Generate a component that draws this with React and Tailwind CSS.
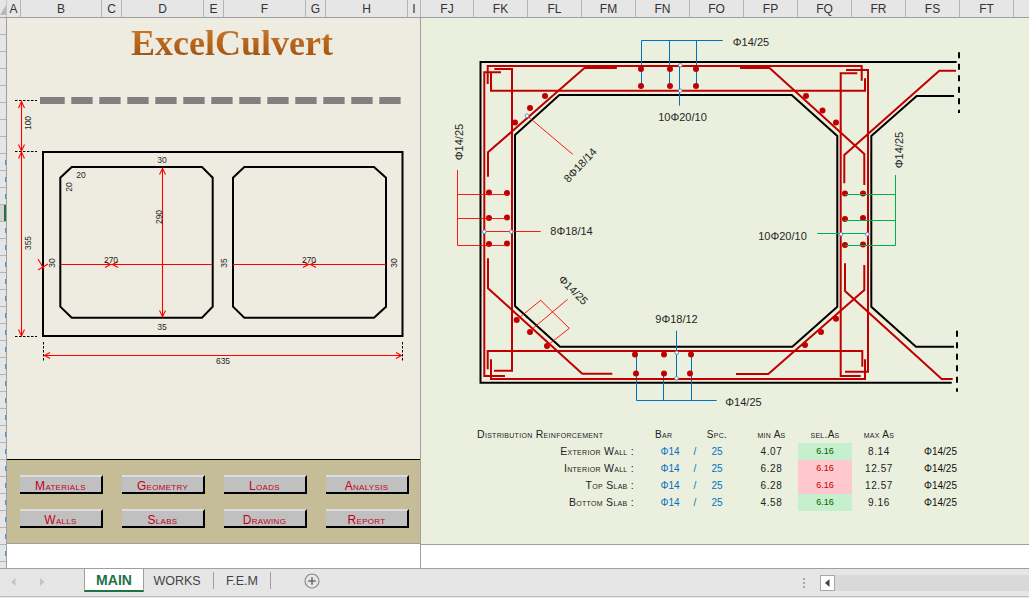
import React from "react";

const COLS_L = [
  ["A", "w-[14px]"], ["B", "w-[81px]"], ["C", "w-[20px]"], ["D", "w-[82px]"], ["E", "w-[20px]"],
  ["F", "w-[82px]"], ["G", "w-[20px]"], ["H", "w-[82px]"], ["I", "w-[13px]"],
  ["FJ", "w-[53px]"], ["FK", "w-[54px]"], ["FL", "w-[54px]"], ["FM", "w-[54px]"], ["FN", "w-[54px]"],
  ["FO", "w-[54px]"], ["FP", "w-[54px]"], ["FQ", "w-[54px]"], ["FR", "w-[54px]"], ["FS", "w-[54px]"], ["FT", "w-[54px]"],
];

const BUTTONS = ["Materials", "Geometry", "Loads", "Analysis", "Walls", "Slabs", "Drawing", "Report"];

const ROWS = [
  { label: "Exterior Wall :", min: "4.07", ok: true, max: "8.14" },
  { label: "Interior Wall :", min: "6.28", ok: false, max: "12.57" },
  { label: "Top Slab :", min: "6.28", ok: false, max: "12.57" },
  { label: "Bottom Slab :", min: "4.58", ok: true, max: "9.16" },
];

const RED = "#c00000";
const BARS = [
  "M487.7 84V66H861.7V80.7",
  "M491 71.7V90.7H865V78.3",
  "M501 72.3H484.3V376H505",
  "M494.3 69H512V370.7H494",
  "M488 176.7V152.3L584.7 67.7H616.7",
  "M488 258.3V288.3L582.3 373.7H612.3",
  "M487.7 369.3V351H862.3V366.7",
  "M491 359.3V379H865V359.3",
  "M857.3 73.3H840.7V376H860.7",
  "M846 70H868V371.7H845",
  "M740 67.7H769.3L864.3 154V185",
  "M956 70.7H939.3L844.3 155V183.3",
  "M736 374H768.3L864.3 290V265",
  "M952.7 379H941.7L845 291V263.3",
];
const DOTS = [
  [641, 69], [670, 69], [696, 69], [641, 86], [670, 86], [696, 86],
  [545, 96], [530, 108], [515, 122.5],
  [489, 192.5], [507, 193], [489, 218], [507, 217.5], [489, 244], [507, 243.5],
  [516.7, 320], [530, 332], [547, 346],
  [635, 354.5], [664, 354.5], [691, 354.5], [636, 373.5], [664, 373.5], [690, 373.5],
  [806, 96], [822.5, 110.5], [836, 122.5],
  [845, 193.5], [863, 193.5], [845, 219], [863, 218], [845, 245], [863, 244.5],
  [836, 318.7], [821, 332], [805, 345],
];
const NODES = [
  [680.3, 65.3], [680.3, 90.7], [676.7, 352.7], [676.5, 378.3],
  [484.3, 231.7], [511.3, 231.7], [527, 115.7], [841, 234.3], [867.3, 234.3],
];
const LEFT_LABELS = [
  [28, 123, "100", -90], [28, 243, "355", -90], [162, 160, "30", 0], [81, 175, "20", 0], [69, 187, "20", -90],
  [159, 217, "290", -90], [52, 263, "30", -90], [111, 260, "270", 0], [224, 263, "35", -90], [309, 260, "270", 0],
  [394, 263, "30", -90], [162, 327, "35", 0], [223, 361, "635", 0],
];
const RIGHT_LABELS = [
  [751, 42, "Φ14/25", 0], [682.5, 117, "10Φ20/10", 0], [580, 165, "8Φ18/14", -47], [459, 142, "Φ14/25", -90],
  [899, 150, "Φ14/25", -90], [571.5, 231, "8Φ18/14", 0], [782.5, 236, "10Φ20/10", 0], [676.5, 319, "9Φ18/12", 0],
  [573.3, 290, "Φ14/25", 45], [743.5, 402, "Φ14/25", 0],
];

function Label({ x, y, t, a, size }) {
  return (
    <text x={x} y={y} fontSize={size} textAnchor="middle" dominantBaseline="central" fill="#262626"
      transform={a ? `rotate(${a} ${x} ${y})` : undefined}>{t}</text>
  );
}

function LeftDrawing() {
  const dashes = Array.from({ length: 13 }, (_, i) => i);
  return (
    <svg width="413" height="279" viewBox="7 90 413 279" className="block">
      {dashes.map((i) => (
        <rect key={i} x={i === 0 ? 40 : 71.3 + (i - 1) * 28} y="97" width={i === 0 ? 24.7 : 21.3} height="7" fill="#808080" />
      ))}
      <g fill="none" stroke="#000" strokeWidth="1" strokeDasharray="2.5 1.5">
        <path d="M15 100.5H37M15 151.5H37M15 336.5H37M43.5 342V361M402.5 342V361" />
      </g>
      <g fill="none" stroke="#000" strokeWidth="2">
        <rect x="43" y="152" width="359.5" height="184" />
        <path d="M71.7 167H202L212.7 177.7V306.7L202 317.7H71.7L60.3 306.7V177.7Z" />
        <path d="M244.3 167H374L386 177.7V306.7L374 317.7H244.3L233 306.7V177.7Z" />
      </g>
      <g fill="none" stroke="#ff0000" strokeWidth="1.1">
        <path d="M21.5 101V151M21.5 152V336M162.5 168V317M60.5 264.5H212M233 264.5H386M44 355.5H402" />
        <path d="M18.5 108L21.5 101.5L24.5 108M18.5 144.5L21.5 151L24.5 144.5M18.5 158.5L21.5 152L24.5 158.5M18.5 329.5L21.5 336L24.5 329.5" />
        <path d="M159.5 174.5L162.5 168.5L165.5 174.5M159.5 310.5L162.5 316.5L165.5 310.5" />
        <path d="M105 261.5L110.5 264.5L105 267.5M118 261.5L112.5 264.5L118 267.5M303 261.5L308.5 264.5L303 267.5M316 261.5L310.5 264.5L316 267.5" />
        <path d="M38 259L44 269M38 270L48 264" />
        <path d="M50 352.5L44.5 355.5L50 358.5M396 352.5L401.5 355.5L396 358.5" />
      </g>
      {LEFT_LABELS.map(([x, y, t, a]) => (
        <Label key={`${x}-${y}`} x={x} y={y} t={t} a={a} size="8.5" />
      ))}
    </svg>
  );
}

function RightDrawing() {
  return (
    <svg width="608" height="408" viewBox="421 18 608 408" className="block">
      <g fill="none" stroke="#000" strokeWidth="2">
        <path d="M956.7 62H480.5V382.7H951.7" />
        <path d="M515 135L559.3 95H791.7L837.3 136V306.7L792.3 346.7H560L515 306Z" />
        <path d="M954 96H916.7L871.3 136V306.7L916 346.7H954" />
        <path d="M959 52.3V113M957 330.7V391.7" strokeDasharray="6 5.5" />
      </g>
      <g fill="none" stroke="#0070c0" strokeWidth="1">
        <path d="M722.7 40.5H641.5V88M669.5 40.5V88M696.5 40.5V88M679.5 65V105.7" />
        <path d="M716.7 400.5H636.5V354M663.5 400.5V373M691.5 400.5V354M676.5 330.7V378" />
      </g>
      <g fill="none" stroke={RED} strokeWidth="2">
        {BARS.map((d) => <path key={d} d={d} />)}
        <path d="M584.7 67.7H616.7M740 67.7H769.3" strokeWidth="2.8" />
      </g>
      {DOTS.map(([x, y]) => <circle key={`${x}-${y}`} cx={x} cy={y} r="3" fill={RED} />)}
      <g fill="none" stroke="#ff0000" strokeWidth="0.9">
        <path d="M457.5 170V245.5H507M457.5 194.5H507M457.5 218.5H507M484 231.5H540.7" />
        <path d="M527 115.7L572.7 154.3" />
        <path d="M517.3 319.3L540.7 300.3L569.3 328.3L546.7 346M533 328.3L567.7 299.3" />
      </g>
      <g fill="none" stroke="#00b050" strokeWidth="1">
        <path d="M895.5 175V245.5H845M895.5 194.5H845M895.5 220.5H845M817.3 233.5H867.3" />
      </g>
      {NODES.map(([x, y]) => (
        <circle key={`${x}-${y}`} cx={x} cy={y} r="1.8" fill="#fff" stroke="#5b7fb0" strokeWidth="0.9" />
      ))}
      {RIGHT_LABELS.map(([x, y, t, a]) => (
        <Label key={`${x}-${y}`} x={x} y={y} t={t} a={a} size="11" />
      ))}
    </svg>
  );
}

function DistributionTable() {
  const cols = "grid grid-cols-[175px_36px_14px_30px_66px_54px_54px_69px] h-[17px] items-center";
  const caps = "[font-variant:small-caps] tracking-[0.3px]";
  return (
    <div className="pl-[56px] text-[10px] text-[#222]">
      <div className={cols}>
        <div className={`${caps} whitespace-nowrap text-[10.5px]`}>Distribution Reinforcement</div>
        <div className={`${caps} pl-[3px] text-[10px]`}>Bar</div>
        <div />
        <div className={`${caps} text-center text-[10px]`}>Spc.</div>
        <div className={`${caps} pl-[13px] text-center text-[10px]`}>min As</div>
        <div className={`${caps} text-center text-[10px]`}>sel.As</div>
        <div className={`${caps} text-center text-[10px]`}>max As</div>
        <div />
      </div>
      {ROWS.map((r) => (
        <div key={r.label} className={cols}>
          <div className={`${caps} pr-[18px] text-right text-[10.5px] whitespace-nowrap`}>{r.label}</div>
          <div className="text-center text-[#0070c0]">Φ14</div>
          <div className="text-center text-[#0070c0]">/</div>
          <div className="text-center text-[#0070c0]">25</div>
          <div className="pl-[13px] text-center tracking-[0.6px]">{r.min}</div>
          <div className={r.ok ? "flex h-full items-center justify-center bg-[#c6efce] text-[#006100] text-[9px]" : "flex h-full items-center justify-center bg-[#ffc7ce] text-[#c00000] text-[9px]"}>6.16</div>
          <div className="text-center tracking-[0.6px]">{r.max}</div>
          <div className="text-center text-[#111]">Φ14/25</div>
        </div>
      ))}
    </div>
  );
}

function SheetTabs() {
  return (
    <div className="flex h-[30px] flex-col border-t border-[#9f9f9f] bg-[#e6e6e6]">
      <div className="flex h-[23px] items-stretch">
        <div className="flex w-[84px] items-center">
          <svg width="84" height="23" viewBox="0 0 84 23" className="block">
            <path d="M15.5 9V17L11 13Z M40 9V17L44.5 13Z" fill="#c4c4c4" />
          </svg>
        </div>
        <div className="flex w-[60px] items-center justify-center border-x border-[#9f9f9f] border-b-2 border-b-[#217346] bg-white pt-[2px] text-[14px] font-bold text-[#217346]">MAIN</div>
        <div className="my-[3px] flex w-[70px] items-center justify-center border-r border-[#9f9f9f] pt-[2px] pr-[3px] text-[12.5px] text-[#444]">WORKS</div>
        <div className="my-[3px] flex w-[57px] items-center justify-center border-r border-[#9f9f9f] pt-[2px] text-[12.5px] text-[#444]">F.E.M</div>
        <div className="flex w-[82px] items-center justify-center">
          <svg width="16" height="16" viewBox="0 0 16 16" className="block">
            <circle cx="8" cy="8" r="7" fill="none" stroke="#8a8a8a" strokeWidth="1.2" />
            <path d="M8 4.2V11.8M4.2 8H11.8" stroke="#6e6e6e" strokeWidth="1.6" />
          </svg>
        </div>
        <div className="flex flex-1 items-center justify-end pt-[4px]">
          <div className="mr-[15px] flex flex-col gap-[2px]">
            <span className="block h-[2px] w-[2px] bg-[#a8a8a8]" />
            <span className="block h-[2px] w-[2px] bg-[#a8a8a8]" />
            <span className="block h-[2px] w-[2px] bg-[#a8a8a8]" />
          </div>
          <div className="flex h-[16px] w-[209px] bg-[#d9d9d9]">
            <div className="flex h-full w-[15px] items-center justify-center border border-[#a8a8a8] bg-white">
              <svg width="5" height="8" viewBox="0 0 5 8" className="block"><path d="M4.5 0V8L0 4Z" fill="#444" /></svg>
            </div>
          </div>
        </div>
      </div>
      <div className="mt-[4px] h-[1px] bg-[#bdbdbd]" />
    </div>
  );
}

export default function App() {
  const rows = Array.from({ length: 33 }, (_, i) => i);
  return (
    <div className="flex h-[598px] w-[1029px] flex-col overflow-hidden bg-white font-['Liberation_Sans',sans-serif]">
      <div className="flex h-[18px] border-b border-[#9f9f9f] bg-[#e6e6e6] text-[12px] text-[#333]">
        <div className="w-[7px] border-r border-[#c4c4c4]">
          <svg width="6" height="17" viewBox="0 0 6 17" className="block"><path d="M6 5V15H0Z" fill="#b8b8b8" /></svg>
        </div>
        {COLS_L.map(([name, w]) => (
          <div key={name} className={`${w} flex items-center justify-center border-r border-[#b4b4b4]`}>{name}</div>
        ))}
      </div>

      <div className="flex min-h-0 flex-1">
        <div className="w-[7px] overflow-hidden border-r border-[#9f9f9f] bg-[#e6e6e6]">
          {rows.map((i) => (
            <div key={i} className={i === 11 ? "flex h-[17px] justify-end border-b border-[#b4b4b4] bg-[#d2d2d2]" : "flex h-[17px] items-center justify-end border-b border-[#b4b4b4]"}>
              {i === 11 ? <span className="block h-full w-[2px] bg-[#217346]" /> : i >= 8 ? <span className="block h-[5px] w-[1px] bg-[#3a9be0]" /> : null}
            </div>
          ))}
        </div>

        <div className="flex w-[414px] flex-col border-r border-[#9f9f9f]">
          <div className="flex-1 bg-[#eeece1]">
            <div className="flex h-[72px] justify-center pt-[3px] pl-[37px]">
              <h1 className="h-fit bg-gradient-to-b from-[#cf8236] via-[#b9651c] to-[#8f4a10] bg-clip-text font-['Liberation_Serif',serif] text-[36px] leading-[44px] font-bold text-transparent">ExcelCulvert</h1>
            </div>
            <LeftDrawing />
          </div>
          <div className="grid h-[85px] grid-cols-[repeat(4,83px)] content-start gap-x-[19px] gap-y-[15px] border-y border-t-black border-b-[#9f9f9f] bg-[#c4bd97] px-[13px] pt-[15px]">
            {BUTTONS.map((b) => (
              <button key={b} className="flex h-[19px] items-center justify-center border-t-2 border-r-2 border-b-2 border-t-[#dcdcdc] border-r-black border-b-black bg-[#c0c0c0] pt-[2px] text-[12px] tracking-[0.3px] text-[#c00020] [font-variant:small-caps]">{b}</button>
            ))}
          </div>
          <div className="h-[24px] bg-white" />
        </div>

        <div className="flex flex-1 flex-col">
          <div className="flex-1 bg-[#ebf0de]">
            <RightDrawing />
            <DistributionTable />
          </div>
          <div className="h-[24px] border-t border-[#9f9f9f] bg-white" />
        </div>
      </div>

      <SheetTabs />
    </div>
  );
}
